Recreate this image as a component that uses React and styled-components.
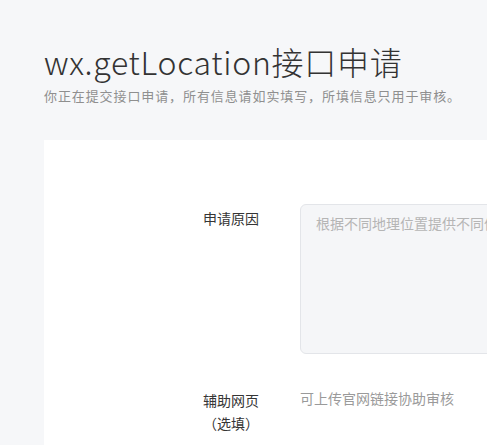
import React from "react";
import styled, { createGlobalStyle } from "styled-components";

const Global = createGlobalStyle`
  html, body { margin: 0; padding: 0; background: #f6f7f9; overflow: hidden; }
  body { font-family: "Noto Sans CJK SC", "Noto Sans", sans-serif; }
`;

const Page = styled.div`
  width: 487px;
  height: 445px;
  overflow: hidden;
  background: #f6f7f9;
  padding: 38px 0 0 44px;
  box-sizing: border-box;
`;

const Title = styled.h1`
  margin: 0;
  font-size: 32px;
  line-height: 46px;
  font-weight: 300;
  letter-spacing: 0.7px;
  color: #333333;
  white-space: nowrap;
`;

const Subtitle = styled.p`
  margin: 2px 0 0;
  font-size: 13px;
  line-height: 20px;
  color: #8f8f8f;
  white-space: nowrap;
  letter-spacing: 0.9px;
`;

const Card = styled.div`
  margin-top: 34px;
  background: #ffffff;
  width: 700px;
  height: 400px;
  padding-top: 64px;
  box-sizing: border-box;
  display: flex;
  flex-direction: column;
  gap: 33px;
`;

const Row = styled.div`
  display: grid;
  grid-template-columns: 215px 1fr;
  column-gap: 41px;
  align-items: start;
`;

const Label = styled.div`
  text-align: right;
  font-size: 14px;
  line-height: 23px;
  color: #353535;
  padding-top: ${(p) => p.$top || 0}px;
`;

const TextArea = styled.div`
  width: 420px;
  height: 150px;
  box-sizing: border-box;
  background: #f5f6f8;
  border: 1px solid #e3e5e9;
  border-radius: 6px;
  padding: 7px 15px;
  font-size: 14px;
  line-height: 22px;
  color: #b5b5b5;
  white-space: nowrap;
  overflow: hidden;
`;

const Hint = styled.div`
  font-size: 14px;
  line-height: 22px;
  color: #9a9a9a;
`;

export default function App() {
  return (
    <>
      <Global />
      <Page>
        <Title>wx.getLocation接口申请</Title>
        <Subtitle>你正在提交接口申请，所有信息请如实填写，所填信息只用于审核。</Subtitle>
        <Card>
          <Row>
            <Label $top={3}>申请原因</Label>
            <TextArea>根据不同地理位置提供不同信息服务</TextArea>
          </Row>
          <Row>
            <Label $top={2}>
              辅助网页
              <br />（选填）
            </Label>
            <Hint>可上传官网链接协助审核</Hint>
          </Row>
        </Card>
      </Page>
    </>
  );
}
